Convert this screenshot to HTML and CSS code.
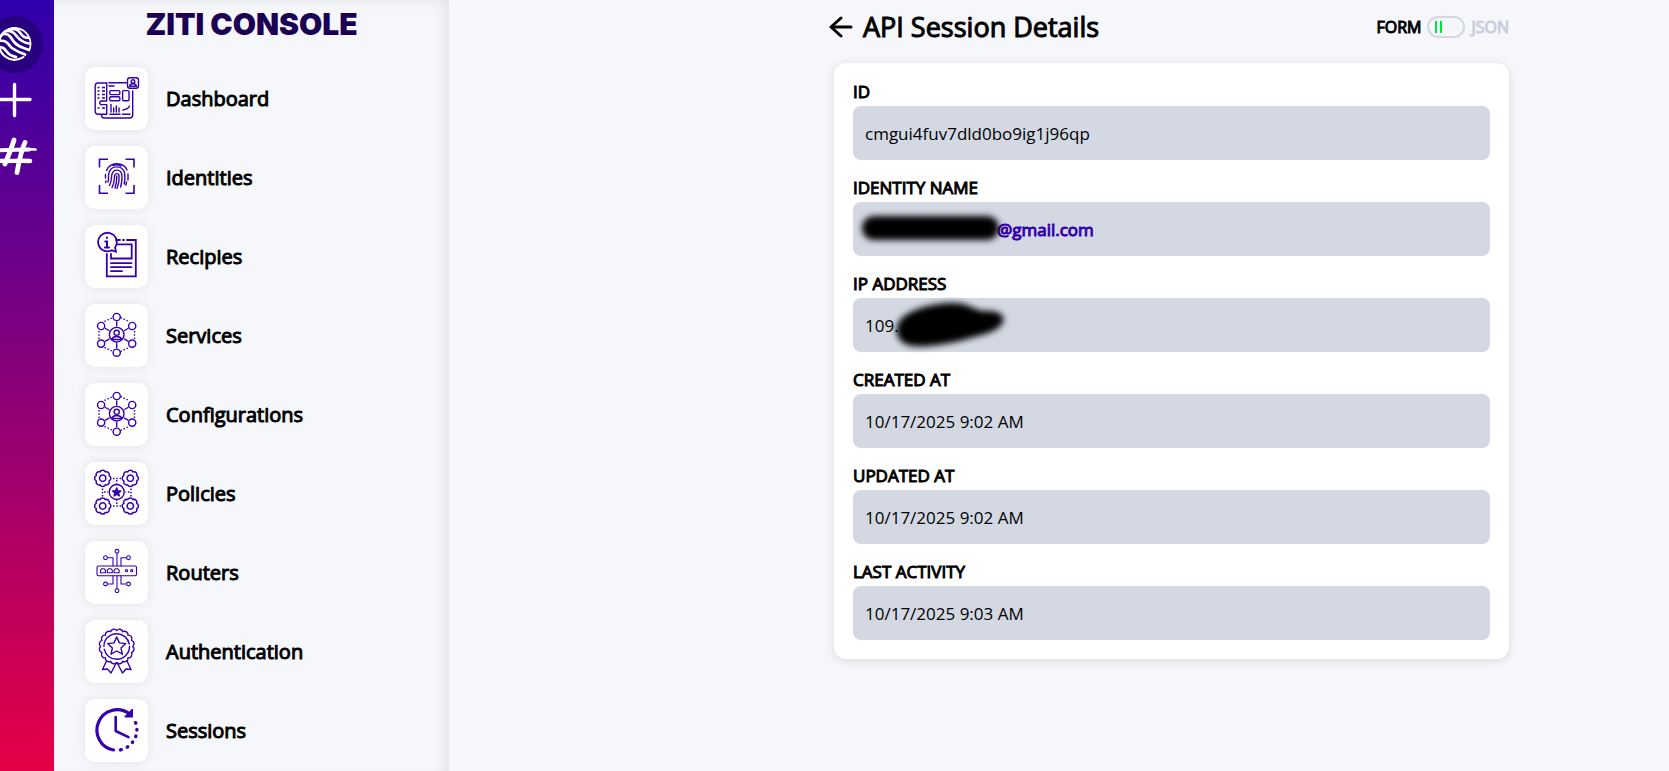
FILE: index.html
```html
<!DOCTYPE html>
<html lang="en">
<head>
<meta charset="utf-8">
<meta name="viewport" content="width=device-width, initial-scale=1">
<title>Ziti Console - API Session Details</title>
<link rel="stylesheet" href="styles.css">
</head>
<body>
<svg class="sprite" aria-hidden="true">
  <symbol id="network" viewBox="0 0 63 63">
    <circle cx="31.7" cy="30.7" r="7.3"/><circle cx="31.7" cy="28.8" r="2.6"/><path d="M26.5 35.5c1-2.3 2.800-3 5.200-3s4.200.7 5.200 3z"/>
    <circle cx="31.7" cy="13" r="3.600"/><circle cx="47.200" cy="22" r="3.600"/><circle cx="47.200" cy="39.600" r="3.600"/><circle cx="31.700" cy="48.700" r="3.600"/><circle cx="16.100" cy="39.600" r="3.600"/><circle cx="16.100" cy="22" r="3.600"/>
    <path d="M31.700 18v4M31.700 39.500v4M20.500 24.500l3.500 2M43 24.500l-3.500 2M20.500 37.200l3.500-2M43 37.200l-3.500-2"/>
    <path stroke-linecap="butt" stroke-dasharray="1.500 1.800" d="M19.500 17.500l8.500-4M35.500 13.500l8.500 4M49.500 27v8M14 27v8M19.500 43.500l8.500 4M35.500 47.500l8.500-4"/>
  </symbol>
  <symbol id="gear" viewBox="-10 -10 20 20">
    <path stroke-width="1.500" d="M6.400-2.650A2.900 2.900 0 0 1 6.400 2.650 2.900 2.900 0 0 1 2.650 6.400 2.900 2.900 0 0 1-2.650 6.400 2.900 2.900 0 0 1-6.400 2.650 2.900 2.900 0 0 1-6.400-2.650 2.900 2.900 0 0 1-2.650-6.400 2.900 2.900 0 0 1 2.650-6.400 2.900 2.900 0 0 1 6.400-2.650z"/><circle stroke-width="1.500" r="3.200"/>
  </symbol>
</svg>
<div class="app">
  <aside class="rail" aria-label="Quick actions">
    <button class="rail-button rail-logo" aria-label="Ziti">
      <svg viewBox="0 0 57 57"><defs><clipPath id="globe"><circle cx="28.500" cy="28" r="17"/></clipPath></defs>
        <g clip-path="url(#globe)" fill="none" stroke="#fff" stroke-width="2.700" stroke-linecap="round">
          <path stroke-width="2.200" d="M37.500 41.200A15.900 15.900 0 1 1 43.500 34"/>
          <path d="M13 19.500c8-4 11 0 14 5s8 7 16 9.500M17 15.500c8-2 11 1 14 5s6 6 12 7M13 25c6-1 8 1 11 5s9 6 15 8.500M12 31c5 0 6 1 9 5s5 4 9 5M23 13c8-1 10 2 12 5s4 4 8 4"/>
        </g></svg>
    </button>
    <button class="rail-button" aria-label="Add"><svg viewBox="0 0 57 53"><path d="M28.500 11.500v31M13 26.500h31" stroke="#fff" stroke-width="3.400" stroke-linecap="round"/></svg></button>
    <button class="rail-button" aria-label="Numbers"><svg viewBox="0 0 57 53" fill="none" stroke="#fff" stroke-linecap="round"><path stroke-width="4.800" d="M28 14c-2.500 9-6 16-9 24M39 16.500c-4 8-6 19-8 30"/><path stroke-width="4" d="M12 24.500c10-1 20-.5 31-1"/><path stroke-width="2.700" d="M34 23.500c6-.5 11-.5 15.500 0"/><path stroke-width="4.400" d="M9 34.500c12 1.500 22-.5 35 .5"/></svg></button>
  </aside>
  <aside class="sidebar">
    <h1 class="brand">ZITI CONSOLE</h1>
    <nav aria-label="Main"><ul class="nav-list">
      <li><a class="nav-link" href="#dashboard"><span class="tile"><svg class="icon" viewBox="0 0 63 63">
        <path d="M41.500 15.700H24M24 19h5M47.700 24v24q0 3-3 3H19q-2 0-2.500-2.500M21.700 16H13q-2.800 0-2.800 2.800v25.400q0 3 3 3h8.500V37.600h-6q-2-1.800 0-3.600h6z"/>
        <rect x="42.500" y="10.700" width="11" height="10.600" rx="2.500"/><circle cx="48" cy="14.500" r="1.800"/><path d="M44.500 19.200q.5-2.500 3.500-2.500t3.500 2.500z"/>
        <path stroke-width="1.300" stroke-linecap="butt" d="M12.500 20.500h2M17 20.500h3M12.500 24h2M17 24h3M12.500 27.500h2M17 27.500h3M12.500 31h2M17 31h3M12.500 41h2M17 41h3"/>
        <rect x="24.800" y="23.600" width="10" height="4" rx="1"/><rect x="24.800" y="29.800" width="10" height="4" rx="1"/><rect x="37.600" y="23.600" width="6.400" height="10.200" rx="1"/>
        <path d="M26 37.500V45M28.700 41v4M31.300 39v6M34 41v4M25 47.300h10M37.500 47.300H45M38 43.200c3-2 4 .5 6.500-4"/></svg></span><span>Dashboard</span></a></li>
      <li><a class="nav-link" href="#identities"><span class="tile"><svg class="icon" viewBox="0 0 63 63">
        <path stroke-width="1.600" stroke-linecap="butt" stroke-linejoin="miter" d="M14.500 21.500v-8.300H23M40.500 13.200H49v8.300M49 39v8.300h-8.500M23 47.300h-8.500V39"/>
        <path d="M20.500 32v-3.500M21.500 24.500C25 15.500 38.500 15.500 42 24M43 28v6M23 36c1-3 0-7 1-9.500C26.500 19 37 19 39.500 26.500 40.300 30 40 34 39.200 38M24.500 39.500c2.500-4 1.500-8 2.500-11.500 2-5.500 8.500-5 9.800.5.600 4 0 8-1.200 12.500M27 41.500c2.300-4 2.300-8.500 2.600-12 .8-2.500 4-2.500 4.500 0 .3 4-.2 8.500-2.100 13M30 42c1.500-4 1.800-8 1.800-12M21 35l-.4 1.500M41.500 36l-.7 3M28 19.500q4-1.500 8 .5"/></svg></span><span>Identities</span></a></li>
      <li><a class="nav-link" href="#recipes"><span class="tile"><svg class="icon" viewBox="0 0 63 63"><g stroke-width="1.800" stroke-linejoin="miter">
        <path d="M30 26.500H31L30 22.500A9.300 9.300 0 1 0 26.800 25.300L31.500 27z"/><path d="M31 15h4M38 15h1M42 15h8.800v36.300h-29V29"/><path d="M32.500 19.300h14.200v14.200H26V29M26 38.200h20.500M26 42.200h20.500M26 46.200h11"/><path stroke-width="2" d="M20.300 16.500H22v6M20 22.500h4M22 12.500v.5"/></g></svg></span><span>Recipies</span></a></li>
      <li><a class="nav-link" href="#services"><span class="tile"><svg class="icon"><use href="#network"/></svg></span><span>Services</span></a></li>
      <li><a class="nav-link" href="#configurations"><span class="tile"><svg class="icon"><use href="#network"/></svg></span><span>Configurations</span></a></li>
      <li><a class="nav-link" href="#policies"><span class="tile"><svg class="icon" viewBox="0 0 63 63">
        <use href="#gear" x="7.700" y="6.300" width="20" height="20"/><use href="#gear" x="35.300" y="6.300" width="20" height="20"/><use href="#gear" x="7.700" y="34" width="20" height="20"/><use href="#gear" x="35.300" y="34" width="20" height="20"/>
        <circle cx="31.700" cy="30" r="7.500"/><path fill="currentColor" d="M31.700 26l1.100 2.800 3 .2-2.300 1.900.8 3-2.600-1.700-2.600 1.700.8-3-2.300-1.900 3-.2z"/>
        <path stroke-linecap="butt" stroke-dasharray="1.500 1.800" stroke-width="1.500" d="M28 16.500h8M31.700 18v4M28 44h8M31.700 42v-4M17.500 26.500v8M46 26.500v8M19 30h4M44.500 30h-4"/></svg></span><span>Policies</span></a></li>
      <li><a class="nav-link" href="#routers"><span class="tile"><svg class="icon icon-fine" viewBox="0 0 63 63">
        <rect x="12" y="25" width="39.500" height="9.700" rx="1.500"/><path d="M15.500 31.700v-2.500l1.500-1.500h2l1.500 1.500v2.500zM22.300 31.700v-2.500l1.500-1.500h2l1.500 1.500v2.500zM29.100 31.700v-2.500l1.500-1.500h2l1.500 1.500v2.500z"/><circle cx="41.500" cy="29.700" r="1.100"/><circle cx="46.700" cy="29.700" r="1.100"/>
        <circle cx="32" cy="10.300" r="1.900"/><circle cx="20.500" cy="16.700" r="1.900"/><circle cx="43.500" cy="16.700" r="1.900"/><circle cx="20.500" cy="43" r="1.900"/><circle cx="43.500" cy="43" r="1.900"/><circle cx="32" cy="49.700" r="1.900"/>
        <path d="M32 12.300V25M22.500 16.700H28V25M41.500 16.700H36V25M32 47.700v-13M22.500 43H28v-8.300M41.500 43H36v-8.300"/></svg></span><span>Routers</span></a></li>
      <li><a class="nav-link" href="#authentication"><span class="tile"><svg class="icon" viewBox="0 0 63 63">
        <path transform="translate(31.700 26.500)" d="M16 0A3.500 3.500 0 0 1 14.800 6.100 3.500 3.500 0 0 1 11.300 11.300 3.500 3.500 0 0 1 6.100 14.800 3.500 3.500 0 0 1 0 16 3.500 3.500 0 0 1-6.100 14.800 3.500 3.500 0 0 1-11.300 11.300 3.500 3.500 0 0 1-14.800 6.100 3.500 3.500 0 0 1-16 0 3.500 3.500 0 0 1-14.800-6.100 3.500 3.500 0 0 1-11.300-11.300 3.500 3.500 0 0 1-6.100-14.800 3.500 3.500 0 0 1 0-16 3.500 3.500 0 0 1 6.100-14.800 3.500 3.500 0 0 1 11.300-11.300 3.500 3.500 0 0 1 14.800-6.100 3.500 3.500 0 0 1 16 0z"/>
        <circle cx="31.700" cy="26.500" r="12.800" stroke-dasharray="37.200 3"/><path d="M31.700 17l2.700 5.900 6.400.7-4.800 4.300 1.400 6.300-5.700-3.200-5.700 3.200 1.400-6.300-4.800-4.300 6.400-.7z"/>
        <path d="M21.500 41L17.500 49.500l5-.5 3.500 4 5-9.500M42 41l4 8.500-5-.5-3.500 4-5-9.500"/></svg></span><span>Authentication</span></a></li>
      <li><a class="nav-link" href="#sessions"><span class="tile"><svg class="icon" viewBox="0 0 63 63">
        <path stroke-width="3.200" d="M28.500 51A20.300 20.300 0 1 1 44 14.500"/><path fill="currentColor" d="M47.300 10.500v7.300h-7.200z"/><path stroke-width="2.600" d="M30.700 18v14l12.800 6.200"/>
        <path stroke-width="3.400" d="M35.500 50.900l.8-.2M42.200 48.200l.5-.4M47.400 43.500l.3-.4M50.700 37.600l.2-.5M51.900 31v-.6M50.800 24.200l-.2-.5"/></svg></span><span>Sessions</span></a></li>
    </ul></nav>
  </aside>
  <main class="main"><div class="content">
    <header class="page-header">
      <button class="back" aria-label="Back"><svg viewBox="0 0 24 22"><path d="M12 2L2 11l10 9M2.500 11H22" fill="none" stroke="#000" stroke-width="3" stroke-linecap="round" stroke-linejoin="round"/></svg></button>
      <h2 class="page-title">API Session Details</h2>
      <div class="mode"><label class="mode-form" for="mode">FORM</label><input class="toggle" id="mode" type="checkbox" role="switch"><label class="mode-json" for="mode">JSON</label></div>
    </header>
    <section class="card">
      <div class="field"><label for="id">ID</label><input class="value" id="id" readonly value="cmgui4fuv7dld0bo9ig1j96qp"></div>
      <div class="field"><span class="label">IDENTITY NAME</span><div class="value"><a class="identity" href="#identity"><span class="hidden-name"></span>@gmail.com</a><svg class="mask" viewBox="0 0 160 54" aria-hidden="true"><path class="mask-soft" d="M21 26H134" stroke="#000" stroke-width="24" stroke-linecap="round"/></svg></div></div>
      <div class="field"><label for="ip">IP ADDRESS</label><div class="masked"><input class="value" id="ip" readonly value="109."><svg class="mask" viewBox="0 0 160 54" aria-hidden="true"><path class="mask-soft" d="M48 21C58 11 80 5 101 5c12 0 18 5 28 8 14-1 24 3 21 11-4 10-22 13-36 17-18 5-46 10-59 6-12-4-15-17-7-26z"/></svg></div></div>
      <div class="field"><label for="created">CREATED AT</label><input class="value" id="created" readonly value="10/17/2025 9:02 AM"></div>
      <div class="field"><label for="updated">UPDATED AT</label><input class="value" id="updated" readonly value="10/17/2025 9:02 AM"></div>
      <div class="field"><label for="activity">LAST ACTIVITY</label><input class="value" id="activity" readonly value="10/17/2025 9:03 AM"></div>
    </section>
  </div></main>
</div>
</body>
</html>
```
FILE: styles.css
```css
* { box-sizing: border-box; }
body { margin: 0; background: #f5f7fb; color: #000; font-family: "Open Sans", sans-serif; }
button { padding: 0; border: 0; background: none; cursor: pointer; }
svg { display: block; }
.sprite { position: absolute; width: 0; height: 0; }
.app { display: flex; height: 100vh; overflow: hidden; }

.rail { flex: none; width: 54px; overflow: hidden; padding-top: 16px; background: linear-gradient(180deg, #2f00ab 0%, #e60046 100%); }
.rail-button { display: block; width: 57px; height: 53px; margin-left: -14px; }
.rail-logo { height: 57px; border-radius: 50%; background: #28007f; }

.sidebar { flex: none; width: 395px; padding: 0 31px; overflow: hidden; box-shadow: inset -8px 4px 16px -6px rgba(0, 0, 0, 0.1); }
.brand { margin: 0 0 18px; text-align: center; font: 900 30px/49px Inter, sans-serif; color: #1b0053; }
.nav-list { display: grid; gap: 16px; margin: 0; padding: 0; list-style: none; }
.nav-link { display: flex; align-items: center; gap: 18px; color: #000; font-size: 20px; text-decoration: none; -webkit-text-stroke: 1px; }
.tile { width: 63px; height: 63px; border-radius: 10px; background: #fff; box-shadow: 0 0 12px rgba(0, 0, 0, 0.08); }
.icon { width: 63px; height: 63px; color: #3500ad; fill: none; stroke: currentColor; stroke-width: 1.4; stroke-linecap: round; stroke-linejoin: round; }
.icon-fine { stroke-width: 1.1; }

.main { flex: 1; display: grid; grid-template-columns: 19fr 34fr 8fr; align-items: start; }
.content { grid-column: 2; }
.page-header { display: flex; align-items: center; height: 53px; margin-bottom: 10px; }
.back { width: 24px; height: 22px; }
.page-title { margin: 0 auto 0 10px; font-size: 27px; font-weight: 400; -webkit-text-stroke: 1px; }
.mode { display: flex; align-items: center; gap: 6px; font-size: 16px; -webkit-text-stroke: 1px; }
.mode-json { color: #c8cedb; -webkit-text-stroke: 1px #c8cedb; }
.toggle { appearance: none; width: 38px; height: 22px; margin: 0; border: 2px solid #d3d8e3; border-radius: 11px; background: linear-gradient(90deg, #00e640 2px, transparent 2px 5px, #00e640 5px 7px, transparent 7px) 6px 3px / 7px 12px no-repeat; }

.card { display: grid; gap: 16px; margin-left: 5px; padding: 17px 19px 19px; border-radius: 12px; background: #fff; box-shadow: 0 2px 10px rgba(0, 0, 0, 0.12); }
.field { display: grid; gap: 2px; }
.field label, .label { font-size: 17px; line-height: 24px; -webkit-text-stroke: 1px; }
.value { position: relative; display: flex; align-items: center; width: 100%; height: 54px; padding: 0 12px; border: 0; border-radius: 8px; background: #d3d8e3; color: #000; font: 17px "Open Sans", sans-serif; }
.identity { color: #3500ad; text-decoration: none; -webkit-text-stroke: 1px; }
.hidden-name { display: inline-block; width: 132px; }
.masked { position: relative; }
.mask { position: absolute; top: 0; left: 0; width: 160px; height: 54px; overflow: visible; pointer-events: none; }
.mask-soft { filter: blur(3px); }
```
